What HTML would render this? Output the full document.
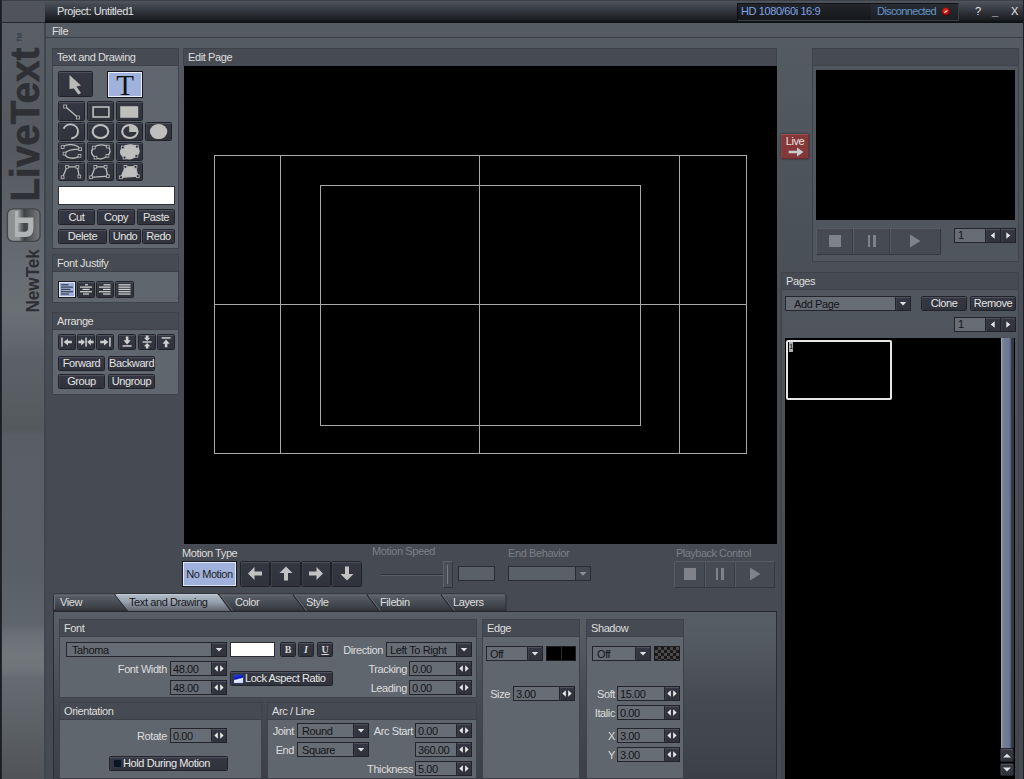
<!DOCTYPE html><html><head><meta charset="utf-8"><title>LiveText</title><style>
*{box-sizing:border-box;margin:0;padding:0}
html,body{width:1024px;height:779px;overflow:hidden;background:#484d55}
body{font:11px "Liberation Sans",sans-serif;letter-spacing:-0.4px;color:#dedede;position:relative}
#app{position:absolute;left:0;top:0;width:1024px;height:779px;overflow:hidden;background:linear-gradient(#555b63 38px,#4f555d 150px,#4a5058 255px,#464b53 400px)}
#app div,#app svg{position:absolute}
.t{white-space:nowrap;line-height:13px;height:13px}
.tr{text-align:right}
.hdr{background:#464b53}
.body{background:#60666e}
.btn{background:linear-gradient(#353842,#30333c);border:1px solid #212328;border-radius:1.5px;box-shadow:inset 0 1px 0 #4d515d,inset 1px 0 0 #3c3f4a;color:#e4e4e4;text-align:center;white-space:nowrap;line-height:13px}
.fld{background:#676d75;border:1px solid #23252a;color:#17181c;white-space:nowrap;line-height:13px}
.dis{color:#7b7f86}
.blk{background:#000}
.ln{background:#b4b4b4}
</style></head><body><div id="app">
<div class="" style="left:0px;top:0px;width:1024px;height:23px;background:linear-gradient(#2a2c31 0px,#4f555e 1px,#434850 5px,#383d45 9px,#272a30 15px,#1a1c20 20px,#0f1012 22px)"></div>
<div class="" style="left:0px;top:1px;width:45px;height:21px;background:#50545a"></div>
<div class="t" style="left:57px;top:5px;width:143px;height:13px;color:#e0e0e0">Project: Untitled1</div>
<div class="" style="left:45px;top:23px;width:979px;height:14px;background:#555b63"></div>
<div class="" style="left:45px;top:37px;width:979px;height:1px;background:#3a3e45"></div>
<div class="" style="left:45px;top:38px;width:979px;height:10px;background:#555b63"></div>
<div class="t" style="left:52px;top:25px;width:48px;height:13px;">File</div>
<div class="" style="left:0px;top:23px;width:45px;height:756px;background:linear-gradient(#5a5f65 0px,#55595f 127px,#5f646a 192px,#666b71 237px,#6b7075 287px,#656a70 312px,#5c6167 335px,#585d62 377px,#54595d 406px,#595e65 413px,#595f67 547px,#5f656c 601px,#6a6f75 611px,#73787d 632px,#6f7479 647px,#666b71 655px,#5e6368 693px,#575b60 725px,#505459 756px)"></div>
<div class="" style="left:0px;top:0px;width:2px;height:779px;background:linear-gradient(90deg,#17181b,#2a2c31)"></div>
<div class="" style="left:44px;top:23px;width:2px;height:756px;background:#3f464e"></div>
<div class="" style="left:2px;top:22px;width:43px;height:1px;background:#25272b"></div>
<div class="" style="left:52px;top:48px;width:127px;height:201px;background:#60666e;border:1px solid #3e4249"></div>
<div class="hdr" style="left:52px;top:48px;width:127px;height:18px;border:1px solid #3e4249;border-bottom-color:#3c4047"></div>
<div class="t" style="left:57px;top:51px;width:122px;height:13px;">Text and Drawing</div>
<div class="btn" style="left:58px;top:71px;width:35px;height:26px;line-height:24px;"></div>
<div class="" style="left:107px;top:71px;width:36px;height:27px;background:#a0b2dc;border:1px solid #15161a;box-shadow:inset 0 0 0 1px #e8eefb"></div>
<div class="t" style="left:107px;top:69px;width:36px;height:30px;line-height:30px;text-align:center;font:29px 'Liberation Serif',serif;letter-spacing:0;color:#111">T</div>
<svg style="left:58px;top:71px" width="35" height="27" viewBox="0 0 35 27"><path d="M11.5 4 L23 14.4 L18.4 15.6 L23 21.9 L20.3 23.5 L15.9 17.5 L11.5 18.1 Z" fill="#b9b9b7"/></svg>
<div class="btn" style="left:58px;top:101px;width:27px;height:20px;line-height:18px;"></div>
<div class="btn" style="left:87px;top:101px;width:27px;height:20px;line-height:18px;"></div>
<div class="btn" style="left:116px;top:101px;width:27px;height:20px;line-height:18px;"></div>
<div class="btn" style="left:58px;top:122px;width:27px;height:19px;line-height:17px;"></div>
<div class="btn" style="left:87px;top:122px;width:27px;height:19px;line-height:17px;"></div>
<div class="btn" style="left:116px;top:122px;width:27px;height:19px;line-height:17px;"></div>
<div class="btn" style="left:144.5px;top:122px;width:27.0px;height:19px;line-height:17px;"></div>
<div class="btn" style="left:58px;top:142px;width:27px;height:19px;line-height:17px;"></div>
<div class="btn" style="left:87px;top:142px;width:27px;height:19px;line-height:17px;"></div>
<div class="btn" style="left:116px;top:142px;width:27px;height:19px;line-height:17px;"></div>
<div class="btn" style="left:58px;top:162px;width:27px;height:19px;line-height:17px;"></div>
<div class="btn" style="left:87px;top:162px;width:27px;height:19px;line-height:17px;"></div>
<div class="btn" style="left:116px;top:162px;width:27px;height:19px;line-height:17px;"></div>
<svg style="left:58px;top:101px" width="28" height="20" viewBox="0 0 28 20"><path d="M7.2 5.6 L20 16.6" stroke="#bebebc" stroke-width="1.3" fill="none"/><rect x="5.7" y="4" width="3" height="3" fill="#2c2f38" stroke="#bebebc" stroke-width="0.8"/><rect x="18.5" y="15" width="3" height="3" fill="#2c2f38" stroke="#bebebc" stroke-width="0.8"/></svg>
<svg style="left:87px;top:101px" width="28" height="20" viewBox="0 0 28 20"><rect x="6.1" y="6" width="15.8" height="10" fill="none" stroke="#bebebc" stroke-width="1.6"/></svg>
<svg style="left:116px;top:101px" width="28" height="20" viewBox="0 0 28 20"><rect x="4.2" y="5.2" width="18" height="11.6" fill="#bebebc"/></svg>
<svg style="left:58px;top:121px" width="28" height="21" viewBox="0 0 28 21"><path d="M5.6 7.7 A7.5 7 0 1 1 13.2 17.4" stroke="#bebebc" stroke-width="2" fill="none"/></svg>
<svg style="left:87px;top:121px" width="28" height="21" viewBox="0 0 28 21"><ellipse cx="13.5" cy="10.5" rx="7.8" ry="6.5" fill="none" stroke="#bebebc" stroke-width="2.1"/></svg>
<svg style="left:116px;top:121px" width="28" height="21" viewBox="0 0 28 21"><ellipse cx="13.9" cy="10.5" rx="7.7" ry="6.5" fill="none" stroke="#bebebc" stroke-width="2.1"/><path d="M13.2 10.9 L13.2 4.2 A7.5 6.5 0 0 1 21.5 10.9 Z" fill="#bebebc"/></svg>
<svg style="left:144.5px;top:121px" width="28" height="21" viewBox="0 0 28 21"><ellipse cx="13.6" cy="10.6" rx="8.7" ry="7.5" fill="#bebebc"/></svg>
<svg style="left:58px;top:142px" width="28" height="20" viewBox="0 0 28 20"><path d="M4.6 5 C8 1.6 19 1.2 22.2 7.2 C17 7.2 9 8 6.5 11.6 C8 17 18 17.6 21.5 13.8" stroke="#bebebc" stroke-width="1.3" fill="none"/><rect x="3.1999999999999997" y="3.6" width="2.8" height="2.8" fill="#2c2f38" stroke="#bebebc" stroke-width="0.8"/><rect x="20.8" y="5.800000000000001" width="2.8" height="2.8" fill="#2c2f38" stroke="#bebebc" stroke-width="0.8"/><rect x="5.1" y="10.2" width="2.8" height="2.8" fill="#2c2f38" stroke="#bebebc" stroke-width="0.8"/><rect x="20.1" y="12.4" width="2.8" height="2.8" fill="#2c2f38" stroke="#bebebc" stroke-width="0.8"/></svg>
<svg style="left:87px;top:142px" width="28" height="20" viewBox="0 0 28 20"><path d="M6.8 5.5 C10 2.2 17 2 20.8 4.6 C24.5 7.5 23.5 11.5 20.4 13.8 C17 17.2 11.5 17.8 8.5 15.6 C3.5 12.5 3.8 8.5 6.8 5.5 Z" stroke="#bebebc" stroke-width="1.3" fill="none"/><rect x="5.4" y="4.1" width="2.8" height="2.8" fill="#2c2f38" stroke="#bebebc" stroke-width="0.8"/><rect x="19.400000000000002" y="3.1999999999999997" width="2.8" height="2.8" fill="#2c2f38" stroke="#bebebc" stroke-width="0.8"/><rect x="7.1" y="14.2" width="2.8" height="2.8" fill="#2c2f38" stroke="#bebebc" stroke-width="0.8"/><rect x="19.0" y="12.4" width="2.8" height="2.8" fill="#2c2f38" stroke="#bebebc" stroke-width="0.8"/></svg>
<svg style="left:116px;top:142px" width="28" height="20" viewBox="0 0 28 20"><path d="M6.8 5.5 C10 2.2 17 2 20.8 4.6 C24.5 7.5 23.5 11.5 20.4 13.8 C17 17.2 11.5 17.8 8.5 15.6 C3.5 12.5 3.8 8.5 6.8 5.5 Z" stroke="#bebebc" stroke-width="1.3" fill="#bebebc"/><rect x="5.4" y="4.1" width="2.8" height="2.8" fill="#2c2f38" stroke="#bebebc" stroke-width="0.8"/><rect x="19.400000000000002" y="3.1999999999999997" width="2.8" height="2.8" fill="#2c2f38" stroke="#bebebc" stroke-width="0.8"/><rect x="7.1" y="14.2" width="2.8" height="2.8" fill="#2c2f38" stroke="#bebebc" stroke-width="0.8"/><rect x="19.0" y="12.4" width="2.8" height="2.8" fill="#2c2f38" stroke="#bebebc" stroke-width="0.8"/></svg>
<svg style="left:58px;top:162px" width="28" height="20" viewBox="0 0 28 20"><path d="M4.6 15.3 L9 4.8 L19.4 4.8 L21.3 14.5" stroke="#bebebc" stroke-width="1.3" fill="none"/><rect x="3.1999999999999997" y="13.9" width="2.8" height="2.8" fill="#2c2f38" stroke="#bebebc" stroke-width="0.8"/><rect x="7.6" y="3.4" width="2.8" height="2.8" fill="#2c2f38" stroke="#bebebc" stroke-width="0.8"/><rect x="18.0" y="3.4" width="2.8" height="2.8" fill="#2c2f38" stroke="#bebebc" stroke-width="0.8"/><rect x="19.900000000000002" y="13.1" width="2.8" height="2.8" fill="#2c2f38" stroke="#bebebc" stroke-width="0.8"/></svg>
<svg style="left:87px;top:162px" width="28" height="20" viewBox="0 0 28 20"><path d="M4.1 15.3 L8.3 4.8 L18.6 4.8 L20.8 14.2 Z" stroke="#bebebc" stroke-width="1.3" fill="none"/><rect x="2.6999999999999997" y="13.9" width="2.8" height="2.8" fill="#2c2f38" stroke="#bebebc" stroke-width="0.8"/><rect x="6.9" y="3.4" width="2.8" height="2.8" fill="#2c2f38" stroke="#bebebc" stroke-width="0.8"/><rect x="17.200000000000003" y="3.4" width="2.8" height="2.8" fill="#2c2f38" stroke="#bebebc" stroke-width="0.8"/><rect x="19.400000000000002" y="12.799999999999999" width="2.8" height="2.8" fill="#2c2f38" stroke="#bebebc" stroke-width="0.8"/></svg>
<svg style="left:116px;top:162px" width="28" height="20" viewBox="0 0 28 20"><path d="M5 15.3 L9.4 4.8 L19.5 4.8 L21.7 14.2 Z" stroke="#bebebc" stroke-width="1.3" fill="#bebebc"/><rect x="3.6" y="13.9" width="2.8" height="2.8" fill="#2c2f38" stroke="#bebebc" stroke-width="0.8"/><rect x="8.0" y="3.4" width="2.8" height="2.8" fill="#2c2f38" stroke="#bebebc" stroke-width="0.8"/><rect x="18.1" y="3.4" width="2.8" height="2.8" fill="#2c2f38" stroke="#bebebc" stroke-width="0.8"/><rect x="20.3" y="12.799999999999999" width="2.8" height="2.8" fill="#2c2f38" stroke="#bebebc" stroke-width="0.8"/></svg>
<div class="" style="left:58px;top:186px;width:117px;height:19px;background:#fff;border:1px solid #2e3036"></div>
<div class="btn" style="left:58px;top:209px;width:37px;height:16px;line-height:14px;">Cut</div>
<div class="btn" style="left:97px;top:209px;width:38px;height:16px;line-height:14px;">Copy</div>
<div class="btn" style="left:137px;top:209px;width:38px;height:16px;line-height:14px;">Paste</div>
<div class="btn" style="left:58px;top:229px;width:49px;height:15px;line-height:13px;">Delete</div>
<div class="btn" style="left:109px;top:229px;width:32px;height:15px;line-height:13px;">Undo</div>
<div class="btn" style="left:142px;top:229px;width:33px;height:15px;line-height:13px;">Redo</div>
<div class="" style="left:52px;top:254px;width:127px;height:49px;background:#60666e;border:1px solid #3e4249"></div>
<div class="hdr" style="left:52px;top:254px;width:127px;height:18px;border:1px solid #3e4249;border-bottom-color:#3c4047"></div>
<div class="t" style="left:57px;top:257px;width:122px;height:13px;">Font Justify</div>
<div class="" style="left:58px;top:281px;width:18px;height:17px;background:#a0b2dc;border:1px solid #1a1c22;box-shadow:inset 0 0 0 1px #dfe6f6"></div>
<div class="btn" style="left:77px;top:281px;width:18px;height:17px;line-height:15px;"></div>
<div class="btn" style="left:96px;top:281px;width:18px;height:17px;line-height:15px;"></div>
<div class="btn" style="left:115px;top:281px;width:19px;height:17px;line-height:15px;"></div>
<svg style="left:58px;top:281px" width="19" height="17" viewBox="0 0 19 17"><rect x="3" y="3.2" width="7.5" height="1.25" fill="#3a4150"/><rect x="3" y="5.5" width="12" height="1.25" fill="#3a4150"/><rect x="3" y="7.8" width="9.5" height="1.25" fill="#3a4150"/><rect x="3" y="10.1" width="12" height="1.25" fill="#3a4150"/><rect x="3" y="12.399999999999999" width="8" height="1.25" fill="#3a4150"/></svg>
<svg style="left:77px;top:281px" width="19" height="17" viewBox="0 0 19 17"><rect x="8" y="3.2" width="3" height="1.25" fill="#d4d4d4"/><rect x="3" y="5.5" width="12" height="1.25" fill="#d4d4d4"/><rect x="5.5" y="7.8" width="7.0" height="1.25" fill="#d4d4d4"/><rect x="3" y="10.1" width="12" height="1.25" fill="#d4d4d4"/><rect x="6" y="12.399999999999999" width="6" height="1.25" fill="#d4d4d4"/></svg>
<svg style="left:96px;top:281px" width="19" height="17" viewBox="0 0 19 17"><rect x="7.5" y="3.2" width="7.0" height="1.25" fill="#d4d4d4"/><rect x="3" y="5.5" width="11.5" height="1.25" fill="#d4d4d4"/><rect x="7" y="7.8" width="7.5" height="1.25" fill="#d4d4d4"/><rect x="3" y="10.1" width="11.5" height="1.25" fill="#d4d4d4"/><rect x="7" y="12.399999999999999" width="7.5" height="1.25" fill="#d4d4d4"/></svg>
<svg style="left:115px;top:281px" width="19" height="17" viewBox="0 0 19 17"><rect x="3.5" y="3.2" width="12.0" height="1.25" fill="#d4d4d4"/><rect x="3.5" y="5.5" width="12.0" height="1.25" fill="#d4d4d4"/><rect x="3.5" y="7.8" width="12.0" height="1.25" fill="#d4d4d4"/><rect x="3.5" y="10.1" width="12.0" height="1.25" fill="#d4d4d4"/><rect x="3.5" y="12.399999999999999" width="12.0" height="1.25" fill="#d4d4d4"/></svg>
<div class="" style="left:52px;top:312px;width:127px;height:83px;background:#60666e;border:1px solid #3e4249"></div>
<div class="hdr" style="left:52px;top:312px;width:127px;height:18px;border:1px solid #3e4249;border-bottom-color:#3c4047"></div>
<div class="t" style="left:57px;top:315px;width:122px;height:13px;">Arrange</div>
<div class="btn" style="left:58px;top:334px;width:18px;height:16px;line-height:14px;"></div>
<div class="btn" style="left:77px;top:334px;width:18px;height:16px;line-height:14px;"></div>
<div class="btn" style="left:96px;top:334px;width:18px;height:16px;line-height:14px;"></div>
<div class="btn" style="left:118px;top:334px;width:18px;height:16px;line-height:14px;"></div>
<div class="btn" style="left:138px;top:334px;width:18px;height:16px;line-height:14px;"></div>
<div class="btn" style="left:157px;top:334px;width:18px;height:16px;line-height:14px;"></div>
<svg style="left:58px;top:334px" width="18" height="16" viewBox="0 0 18 16"><rect x="3.2" y="3.6" width="1.5" height="9" fill="#cfcfcf"/><path d="M5.6 8.1 L10.0 4.699999999999999 L10.0 6.85 L13.8 6.85 L13.8 9.35 L10.0 9.35 L10.0 11.5 Z" fill="#cfcfcf"/></svg>
<svg style="left:77px;top:334px" width="18" height="16" viewBox="0 0 18 16"><rect x="8.3" y="3.6" width="1.5" height="9" fill="#cfcfcf"/><path d="M8 8.1 L4.2 4.699999999999999 L4.2 6.85 L1.4000000000000004 6.85 L1.4000000000000004 9.35 L4.2 9.35 L4.2 11.5 Z" fill="#cfcfcf"/><path d="M10.1 8.1 L13.899999999999999 4.699999999999999 L13.899999999999999 6.85 L16.7 6.85 L16.7 9.35 L13.899999999999999 9.35 L13.899999999999999 11.5 Z" fill="#cfcfcf"/></svg>
<svg style="left:96px;top:334px" width="18" height="16" viewBox="0 0 18 16"><rect x="13.2" y="3.6" width="1.5" height="9" fill="#cfcfcf"/><path d="M12.4 8.1 L8.0 4.699999999999999 L8.0 6.85 L4.2 6.85 L4.2 9.35 L8.0 9.35 L8.0 11.5 Z" fill="#cfcfcf"/></svg>
<svg style="left:118px;top:334px" width="18" height="16" viewBox="0 0 18 16"><rect x="4.6" y="11.2" width="9" height="1.5" fill="#cfcfcf"/><path d="M9.1 10.4 L5.5 6.2 L7.8 6.2 L7.8 2.6 L10.4 2.6 L10.4 6.2 L12.7 6.2 Z" fill="#cfcfcf"/></svg>
<svg style="left:138px;top:334px" width="18" height="16" viewBox="0 0 18 16"><rect x="4.6" y="7.3" width="9" height="1.4" fill="#cfcfcf"/><path d="M9.1 6.9 L5.8999999999999995 3.7 L7.8 3.7 L7.8 1.5 L10.4 1.5 L10.4 3.7 L12.3 3.7 Z" fill="#cfcfcf"/><path d="M9.1 9.1 L5.8999999999999995 12.3 L7.8 12.3 L7.8 14.5 L10.4 14.5 L10.4 12.3 L12.3 12.3 Z" fill="#cfcfcf"/></svg>
<svg style="left:157px;top:334px" width="18" height="16" viewBox="0 0 18 16"><rect x="4.6" y="3.2" width="9" height="1.5" fill="#cfcfcf"/><path d="M9.1 5.5 L5.5 9.7 L7.8 9.7 L7.8 13.299999999999999 L10.4 13.299999999999999 L10.4 9.7 L12.7 9.7 Z" fill="#cfcfcf"/></svg>
<div class="btn" style="left:58px;top:356px;width:47px;height:15px;line-height:13px;">Forward</div>
<div class="btn" style="left:108px;top:356px;width:47px;height:15px;line-height:13px;">Backward</div>
<div class="btn" style="left:58px;top:374px;width:47px;height:15px;line-height:13px;">Group</div>
<div class="btn" style="left:108px;top:374px;width:47px;height:15px;line-height:13px;">Ungroup</div>
<div class="hdr" style="left:183px;top:48px;width:594px;height:18px;border:1px solid #3e4249;border-bottom:0"></div>
<div class="t" style="left:188px;top:51px;width:112px;height:13px;">Edit Page</div>
<div class="blk" style="left:184px;top:66px;width:593px;height:478px;"></div>
<div class="" style="left:214px;top:155px;width:533px;height:1px;background:#a8a8a8"></div>
<div class="" style="left:214px;top:453px;width:533px;height:1px;background:#a8a8a8"></div>
<div class="" style="left:214px;top:155px;width:1px;height:299px;background:#a8a8a8"></div>
<div class="" style="left:746px;top:155px;width:1px;height:299px;background:#a8a8a8"></div>
<div class="" style="left:320px;top:185px;width:321px;height:1px;background:#a8a8a8"></div>
<div class="" style="left:320px;top:425px;width:321px;height:1px;background:#a8a8a8"></div>
<div class="" style="left:320px;top:185px;width:1px;height:241px;background:#a8a8a8"></div>
<div class="" style="left:640px;top:185px;width:1px;height:241px;background:#a8a8a8"></div>
<div class="" style="left:214px;top:304px;width:533px;height:1px;background:#a8a8a8"></div>
<div class="" style="left:280px;top:155px;width:1px;height:299px;background:#a8a8a8"></div>
<div class="" style="left:479px;top:155px;width:1px;height:299px;background:#a8a8a8"></div>
<div class="" style="left:679px;top:155px;width:1px;height:299px;background:#a8a8a8"></div>
<div class="t" style="left:182px;top:547px;width:118px;height:13px;">Motion Type</div>
<div class="" style="left:182px;top:561px;width:55px;height:26px;background:#a0b2dc;border:1px solid #1a1c22;box-shadow:inset 0 0 0 1px #dfe6f6;color:#1b1d24;text-align:center;line-height:24px">No Motion</div>
<div class="btn" style="left:239.5px;top:561px;width:30.5px;height:26px;line-height:24px;"></div>
<div class="btn" style="left:270px;top:561px;width:30.5px;height:26px;line-height:24px;"></div>
<div class="btn" style="left:300.5px;top:561px;width:30.5px;height:26px;line-height:24px;"></div>
<div class="btn" style="left:331px;top:561px;width:30.5px;height:26px;line-height:24px;"></div>
<svg style="left:240px;top:560px" width="30" height="27" viewBox="0 0 30 27"><g transform="rotate(0 15 13.5)"><path d="M8 13.5 L14.5 7 L14.5 11.5 L22 11.5 L22 15.5 L14.5 15.5 L14.5 20 Z" fill="#c2c2c2"/></g></svg>
<svg style="left:270.5px;top:560px" width="30" height="27" viewBox="0 0 30 27"><g transform="rotate(90 15 13.5)"><path d="M8 13.5 L14.5 7 L14.5 11.5 L22 11.5 L22 15.5 L14.5 15.5 L14.5 20 Z" fill="#c2c2c2"/></g></svg>
<svg style="left:300.5px;top:560px" width="30" height="27" viewBox="0 0 30 27"><g transform="rotate(180 15 13.5)"><path d="M8 13.5 L14.5 7 L14.5 11.5 L22 11.5 L22 15.5 L14.5 15.5 L14.5 20 Z" fill="#c2c2c2"/></g></svg>
<svg style="left:331.5px;top:560px" width="30" height="27" viewBox="0 0 30 27"><g transform="rotate(270 15 13.5)"><path d="M8 13.5 L14.5 7 L14.5 11.5 L22 11.5 L22 15.5 L14.5 15.5 L14.5 20 Z" fill="#c2c2c2"/></g></svg>
<div class="t dis" style="left:372px;top:545px;width:98px;height:13px;">Motion Speed</div>
<div class="" style="left:381px;top:574px;width:62px;height:1px;background:#2e3137"></div>
<div class="" style="left:381px;top:575px;width:62px;height:1px;background:#5a5f67"></div>
<div class="" style="left:443px;top:561px;width:10px;height:27px;background:#4a4f57;border:1px solid;border-color:#5c616a #33363c #33363c #5c616a"></div>
<div class="" style="left:447px;top:565px;width:1px;height:19px;background:#767b83"></div>
<div class="" style="left:458px;top:566px;width:37px;height:15px;background:#5a6068;border:1px solid #2a2c32"></div>
<div class="t dis" style="left:508px;top:547px;width:92px;height:13px;">End Behavior</div>
<div class="" style="left:508px;top:566px;width:83px;height:15px;background:#5a6068;border:1px solid #2a2c32"></div>
<div class="" style="left:575px;top:566px;width:16px;height:15px;background:#454951;border:1px solid #2a2c32"></div>
<svg style="left:575px;top:566px" width="16" height="15" viewBox="0 0 16 15"><path d="M4.5 6 L11.5 6 L8 9.8 Z" fill="#8c9096"/></svg>
<div class="t dis" style="left:676px;top:547px;width:104px;height:13px;letter-spacing:-0.52px">Playback Control</div>
<div class="" style="left:674px;top:561px;width:101px;height:27px;background:#464b53;border:1px solid;border-color:#575c64 #35383e #35383e #575c64;border-radius:2px"></div>
<div class="" style="left:704px;top:562px;width:1px;height:25px;background:#3a3d43"></div>
<div class="" style="left:705px;top:562px;width:1px;height:25px;background:#565b63"></div>
<div class="" style="left:734px;top:562px;width:1px;height:25px;background:#3a3d43"></div>
<div class="" style="left:735px;top:562px;width:1px;height:25px;background:#565b63"></div>
<div class="" style="left:684px;top:568px;width:12px;height:12px;background:#7f8389"></div>
<div class="" style="left:715.5px;top:568px;width:2.5px;height:12px;background:#7f8389"></div>
<div class="" style="left:721px;top:568px;width:2.5px;height:12px;background:#7f8389"></div>
<svg style="left:749px;top:567px" width="12" height="14" viewBox="0 0 12 14"><path d="M1 0.5 L11.5 7 L1 13.5 Z" fill="#7f8389"/></svg>
<svg style="left:53px;top:593px" width="454" height="19" viewBox="0 0 454 19"><defs><linearGradient id="tg" x1="0" y1="0" x2="0" y2="1"><stop offset="0" stop-color="#5c626a"/><stop offset="0.45" stop-color="#4b5058"/><stop offset="0.85" stop-color="#393d44"/><stop offset="1" stop-color="#2f3237"/></linearGradient><linearGradient id="ta" x1="0" y1="0" x2="0" y2="1"><stop offset="0" stop-color="#b6bfcc"/><stop offset="0.45" stop-color="#98a1ae"/><stop offset="1" stop-color="#5d636b"/></linearGradient></defs><path d="M0.5 18 L0.5 3 Q0.5 1 2.5 1 L451 1 Q453 1 453 3 L453 18 Z" fill="url(#tg)" stroke="#2a2d32" stroke-width="1"/><path d="M1.5 16 L1.5 2 L452 2" fill="none" stroke="#6c727a" stroke-width="1"/><path d="M166 1.5 L178 17.5" stroke="#2a2d32" stroke-width="1.4" fill="none"/><path d="M167.4 2 L179.4 17.5" stroke="#6a7078" stroke-width="1" fill="none"/><path d="M240 1.5 L252 17.5" stroke="#2a2d32" stroke-width="1.4" fill="none"/><path d="M241.4 2 L253.4 17.5" stroke="#6a7078" stroke-width="1" fill="none"/><path d="M314 1.5 L326 17.5" stroke="#2a2d32" stroke-width="1.4" fill="none"/><path d="M315.4 2 L327.4 17.5" stroke="#6a7078" stroke-width="1" fill="none"/><path d="M388 1.5 L400 17.5" stroke="#2a2d32" stroke-width="1.4" fill="none"/><path d="M389.4 2 L401.4 17.5" stroke="#6a7078" stroke-width="1" fill="none"/><path d="M75 18.5 L62 2 Q61 0.6 63 0.6 L163 0.6 Q165 0.6 166 2 L178 18.5 Z" fill="url(#ta)" stroke="#2a2d32" stroke-width="1"/><path d="M63.5 1.6 L164 1.6" stroke="#c4ccd8" stroke-width="1" fill="none"/><path d="M75.8 18.5 L177.2 18.5" stroke="#5d636b" stroke-width="1.4" fill="none"/></svg>
<div class="t" style="left:60px;top:596px;width:100px;height:13px;">View</div>
<div class="t" style="left:129px;top:596px;width:100px;height:13px;color:#17181c">Text and Drawing</div>
<div class="t" style="left:235px;top:596px;width:100px;height:13px;">Color</div>
<div class="t" style="left:306px;top:596px;width:100px;height:13px;">Style</div>
<div class="t" style="left:380px;top:596px;width:100px;height:13px;">Filebin</div>
<div class="t" style="left:453px;top:596px;width:100px;height:13px;">Layers</div>
<div class="" style="left:737px;top:3px;width:222px;height:18px;background:linear-gradient(#22252a,#15171a);border:1px solid #0d0e10;border-top-color:#131417;border-bottom-color:#3a3e45;border-right-color:#3a3e45"></div>
<div class="" style="left:871px;top:4px;width:87px;height:16px;background:linear-gradient(#282c33,#1c1f24)"></div>
<div class="t" style="left:741px;top:5px;width:119px;height:13px;color:#7fa6e8">HD 1080/60i 16:9</div>
<div class="t" style="left:877px;top:5px;width:73px;height:13px;color:#6696c8;letter-spacing:-0.65px">Disconnected</div>
<svg style="left:940px;top:6px" width="12" height="12" viewBox="0 0 12 12"><defs><radialGradient id="rd" cx="0.45" cy="0.4" r="0.6"><stop offset="0" stop-color="#f03a30"/><stop offset="0.55" stop-color="#b81212"/><stop offset="1" stop-color="#3a0606"/></radialGradient></defs><circle cx="6" cy="5.7" r="4.3" fill="url(#rd)"/><path d="M4.3 6.8 L7.6 4.5" stroke="#f0c4c4" stroke-width="1.2"/></svg>
<div class="t" style="left:975px;top:5px;width:10px;height:13px;color:#e4e4e4;letter-spacing:0;font-size:11px">?</div>
<div class="t" style="left:992px;top:5px;width:12px;height:13px;color:#e4e4e4;letter-spacing:0;font-size:11px;font-weight:bold">_</div>
<div class="t" style="left:1011px;top:5px;width:11px;height:13px;color:#e4e4e4;letter-spacing:0;font-size:11px">X</div>
<div class="" style="left:781px;top:134px;width:28px;height:25px;background:#853839;border:1px solid;border-color:#a04a4a #702e2f #6a2a2b #8e3e3f;box-shadow:0 0 2px rgba(30,32,36,0.8)"></div>
<div class="t" style="left:781px;top:135px;width:28px;height:13px;text-align:center;color:#ece2e2">Live</div>
<svg style="left:787px;top:146.5px" width="18" height="10" viewBox="0 0 18 10"><path d="M1.7 3.8 L10 3.8 L10 0.6 L16.4 5 L10 9.4 L10 6.3 L1.7 6.3 Z" fill="#c8cccc"/></svg>
<div class="" style="left:812px;top:48px;width:207px;height:214px;background:#50565e;border:1px solid #3e4249"></div>
<div class="hdr" style="left:812px;top:48px;width:207px;height:18px;border:1px solid #3e4249"></div>
<div class="blk" style="left:816px;top:70px;width:199px;height:150px;"></div>
<div class="" style="left:816px;top:228px;width:125px;height:27px;background:#464b53;border:1px solid;border-color:#575c64 #35383e #35383e #575c64;border-radius:2px"></div>
<div class="" style="left:852px;top:229px;width:1px;height:25px;background:#3a3d43"></div>
<div class="" style="left:853px;top:229px;width:1px;height:25px;background:#565b63"></div>
<div class="" style="left:889px;top:229px;width:1px;height:25px;background:#3a3d43"></div>
<div class="" style="left:890px;top:229px;width:1px;height:25px;background:#565b63"></div>
<div class="" style="left:829px;top:235px;width:12px;height:12px;background:#7f8389"></div>
<div class="" style="left:867.5px;top:235px;width:2.5px;height:12px;background:#7f8389"></div>
<div class="" style="left:873px;top:235px;width:2.5px;height:12px;background:#7f8389"></div>
<svg style="left:909px;top:234px" width="12" height="14" viewBox="0 0 12 14"><path d="M1 0.5 L11.5 7 L1 13.5 Z" fill="#7f8389"/></svg>
<div class="fld" style="left:954px;top:228px;width:62px;height:15px;"></div>
<div class="t" style="left:958px;top:228px;width:58px;height:15px;line-height:15px;height:15px;color:#141518">1</div>
<div class="btn" style="left:985px;top:228px;width:16px;height:15px;"></div>
<svg style="left:985px;top:228px" width="16" height="15" viewBox="0 0 16 15"><path d="M9.7 4.3 L9.7 10.7 L5.7 7.5 Z" fill="#e6e6e6"/></svg>
<div class="btn" style="left:1000px;top:228px;width:16px;height:15px;"></div>
<svg style="left:1000px;top:228px" width="16" height="15" viewBox="0 0 16 15"><path d="M6.3 4.3 L6.3 10.7 L10.3 7.5 Z" fill="#e6e6e6"/></svg>
<div class="" style="left:781px;top:272px;width:238px;height:507px;background:linear-gradient(#50565e 30px,#4b5058 200px,#41454b 507px);border:1px solid #3e4249;border-bottom:0"></div>
<div class="hdr" style="left:781px;top:272px;width:238px;height:18px;border:1px solid #3e4249"></div>
<div class="t" style="left:786px;top:275px;width:114px;height:13px;">Pages</div>
<div class="fld" style="left:785px;top:296px;width:126px;height:15px;"></div>
<div class="t" style="left:794px;top:297px;width:101px;height:15px;line-height:15px;height:15px;color:#141518">Add Page</div>
<div class="btn" style="left:895px;top:296px;width:16px;height:15px;"></div>
<svg style="left:895px;top:296px" width="16" height="15" viewBox="0 0 16 15"><path d="M4.8 6.1 L11.2 6.1 L8.0 9.5 Z" fill="#e2e2e2"/></svg>
<div class="btn" style="left:921px;top:296px;width:46px;height:15px;line-height:13px;">Clone</div>
<div class="btn" style="left:970px;top:296px;width:46px;height:15px;line-height:13px;">Remove</div>
<div class="fld" style="left:954px;top:317px;width:62px;height:15px;"></div>
<div class="t" style="left:958px;top:317px;width:58px;height:15px;line-height:15px;height:15px;color:#141518">1</div>
<div class="btn" style="left:985px;top:317px;width:16px;height:15px;"></div>
<svg style="left:985px;top:317px" width="16" height="15" viewBox="0 0 16 15"><path d="M9.7 4.3 L9.7 10.7 L5.7 7.5 Z" fill="#e6e6e6"/></svg>
<div class="btn" style="left:1000px;top:317px;width:16px;height:15px;"></div>
<svg style="left:1000px;top:317px" width="16" height="15" viewBox="0 0 16 15"><path d="M6.3 4.3 L6.3 10.7 L10.3 7.5 Z" fill="#e6e6e6"/></svg>
<div class="blk" style="left:785px;top:338px;width:230px;height:441px;"></div>
<div class="" style="left:786px;top:340px;width:106px;height:60px;border:2px solid #e6e6e6;border-radius:2px;background:#000"></div>
<div class="" style="left:789px;top:342px;width:4px;height:10px;font-size:8px;line-height:10px;color:#16171a;letter-spacing:0;background:#b0b0b0;text-align:center;overflow:hidden">1</div>
<div class="" style="left:1000px;top:338px;width:15px;height:441px;background:#000"></div>
<div class="" style="left:1001px;top:338px;width:13px;height:410px;background:linear-gradient(90deg,#a4acb8 0px,#7f8ba0 1.5px,#707d94 3px,#6c7990 8px,#56617a 9.5px,#363c4a 10.5px,#2e333d 13px)"></div>
<div class="btn" style="left:1000px;top:748px;width:14px;height:14px;line-height:12px;"></div>
<div class="btn" style="left:1000px;top:763px;width:14px;height:13px;line-height:11px;"></div>
<svg style="left:1000px;top:748px" width="14" height="14" viewBox="0 0 14 14"><path d="M3 9.6 L11 9.6 L7 5.8 Z" fill="#e2e2e2"/></svg>
<svg style="left:1000px;top:763px" width="14" height="13" viewBox="0 0 14 13"><path d="M3 4.6 L11 4.6 L7 8.4 Z" fill="#e2e2e2"/></svg>
<div class="" style="left:53px;top:611px;width:724px;height:168px;background:linear-gradient(#585e66 0px,#545a62 30px,#454a52 90px,#3c4046 168px);border:1px solid #2a2d32;border-bottom:0;border-top-color:#26282d"></div>
<div class="" style="left:59px;top:619px;width:418px;height:79px;background:#60666e;border:1px solid #3e4249"></div>
<div class="hdr" style="left:59px;top:619px;width:418px;height:18px;border:1px solid #3e4249;border-bottom-color:#3c4047"></div>
<div class="t" style="left:64px;top:622px;width:413px;height:13px;">Font</div>
<div class="fld" style="left:66px;top:642px;width:161px;height:15px;"></div>
<div class="t" style="left:72px;top:643px;width:139px;height:15px;line-height:15px;height:15px;color:#141518">Tahoma</div>
<div class="btn" style="left:211px;top:642px;width:16px;height:15px;"></div>
<svg style="left:211px;top:642px" width="16" height="15" viewBox="0 0 16 15"><path d="M4.8 6.1 L11.2 6.1 L8.0 9.5 Z" fill="#e2e2e2"/></svg>
<div class="" style="left:230px;top:642px;width:45px;height:15px;background:#fff;border:1px solid #2a2c32"></div>
<div class="btn" style="left:280px;top:642px;width:16px;height:15px;line-height:13px;font:bold 10px 'Liberation Serif',serif;letter-spacing:0;line-height:13px;color:#d8d8d8">B</div>
<div class="btn" style="left:298px;top:642px;width:16px;height:15px;line-height:13px;font:italic bold 10px 'Liberation Serif',serif;letter-spacing:0;line-height:13px;color:#d8d8d8">I</div>
<div class="btn" style="left:317px;top:642px;width:16px;height:15px;line-height:13px;font:bold 10px 'Liberation Serif',serif;letter-spacing:0;line-height:13px;color:#d8d8d8;text-decoration:underline">U</div>
<div class="t tr" style="left:293px;top:644px;width:90px;height:13px;">Direction</div>
<div class="fld" style="left:386px;top:642px;width:86px;height:15px;"></div>
<div class="t" style="left:390px;top:643px;width:66px;height:15px;line-height:15px;height:15px;color:#141518">Left To Right</div>
<div class="btn" style="left:456px;top:642px;width:16px;height:15px;"></div>
<svg style="left:456px;top:642px" width="16" height="15" viewBox="0 0 16 15"><path d="M4.8 6.1 L11.2 6.1 L8.0 9.5 Z" fill="#e2e2e2"/></svg>
<div class="t tr" style="left:77px;top:663px;width:90px;height:13px;">Font Width</div>
<div class="fld" style="left:170px;top:661px;width:57px;height:15px;"></div>
<div class="t" style="left:173px;top:662px;width:38px;height:15px;line-height:15px;height:15px;color:#141518">48.00</div>
<div class="btn" style="left:211px;top:661px;width:16px;height:15px;"></div>
<svg style="left:211px;top:661px" width="16" height="15" viewBox="0 0 16 15"><path d="M6.8 4.3 L6.8 10.7 L3.4000000000000004 7.5 Z" fill="#ececec"/><path d="M9.2 4.3 L9.2 10.7 L12.6 7.5 Z" fill="#ececec"/></svg>
<div class="fld" style="left:170px;top:680px;width:57px;height:15px;"></div>
<div class="t" style="left:173px;top:681px;width:38px;height:15px;line-height:15px;height:15px;color:#141518">48.00</div>
<div class="btn" style="left:211px;top:680px;width:16px;height:15px;"></div>
<svg style="left:211px;top:680px" width="16" height="15" viewBox="0 0 16 15"><path d="M6.8 4.3 L6.8 10.7 L3.4000000000000004 7.5 Z" fill="#ececec"/><path d="M9.2 4.3 L9.2 10.7 L12.6 7.5 Z" fill="#ececec"/></svg>
<div class="btn" style="left:230px;top:671px;width:103px;height:15px;line-height:13px;"></div>
<div class="" style="left:234px;top:675px;width:9px;height:8px;background:linear-gradient(165deg,#3344f4 0%,#0812b4 42%,#eef0ff 56%,#c4ccff 100%);box-shadow:0 0 2px #3050c8"></div>
<div class="t" style="left:245px;top:672px;width:89px;height:13px;color:#e8e8e8;letter-spacing:-0.45px">Lock Aspect Ratio</div>
<div class="t tr" style="left:317px;top:663px;width:90px;height:13px;">Tracking</div>
<div class="fld" style="left:409px;top:661px;width:63px;height:15px;"></div>
<div class="t" style="left:412px;top:662px;width:44px;height:15px;line-height:15px;height:15px;color:#141518">0.00</div>
<div class="btn" style="left:456px;top:661px;width:16px;height:15px;"></div>
<svg style="left:456px;top:661px" width="16" height="15" viewBox="0 0 16 15"><path d="M6.8 4.3 L6.8 10.7 L3.4000000000000004 7.5 Z" fill="#ececec"/><path d="M9.2 4.3 L9.2 10.7 L12.6 7.5 Z" fill="#ececec"/></svg>
<div class="t tr" style="left:317px;top:682px;width:90px;height:13px;">Leading</div>
<div class="fld" style="left:409px;top:680px;width:63px;height:15px;"></div>
<div class="t" style="left:412px;top:681px;width:44px;height:15px;line-height:15px;height:15px;color:#141518">0.00</div>
<div class="btn" style="left:456px;top:680px;width:16px;height:15px;"></div>
<svg style="left:456px;top:680px" width="16" height="15" viewBox="0 0 16 15"><path d="M6.8 4.3 L6.8 10.7 L3.4000000000000004 7.5 Z" fill="#ececec"/><path d="M9.2 4.3 L9.2 10.7 L12.6 7.5 Z" fill="#ececec"/></svg>
<div class="" style="left:59px;top:702px;width:203px;height:77px;background:#60666e;border:1px solid #3e4249"></div>
<div class="hdr" style="left:59px;top:702px;width:203px;height:18px;border:1px solid #3e4249;border-bottom-color:#3c4047"></div>
<div class="t" style="left:64px;top:705px;width:198px;height:13px;">Orientation</div>
<div class="t tr" style="left:77px;top:730px;width:90px;height:13px;">Rotate</div>
<div class="fld" style="left:170px;top:728px;width:57px;height:15px;"></div>
<div class="t" style="left:173px;top:729px;width:38px;height:15px;line-height:15px;height:15px;color:#141518">0.00</div>
<div class="btn" style="left:211px;top:728px;width:16px;height:15px;"></div>
<svg style="left:211px;top:728px" width="16" height="15" viewBox="0 0 16 15"><path d="M6.8 4.3 L6.8 10.7 L3.4000000000000004 7.5 Z" fill="#ececec"/><path d="M9.2 4.3 L9.2 10.7 L12.6 7.5 Z" fill="#ececec"/></svg>
<div class="btn" style="left:109px;top:756px;width:119px;height:15px;line-height:13px;"></div>
<div class="" style="left:113px;top:759px;width:9px;height:9px;background:#0c1620;border:1px solid #2c3a48"></div>
<div class="t" style="left:123px;top:757px;width:105px;height:13px;color:#e8e8e8">Hold During Motion</div>
<div class="" style="left:267px;top:702px;width:210px;height:77px;background:#60666e;border:1px solid #3e4249"></div>
<div class="hdr" style="left:267px;top:702px;width:210px;height:18px;border:1px solid #3e4249;border-bottom-color:#3c4047"></div>
<div class="t" style="left:272px;top:705px;width:205px;height:13px;">Arc / Line</div>
<div class="t tr" style="left:204px;top:725px;width:90px;height:13px;">Joint</div>
<div class="fld" style="left:297px;top:723px;width:72px;height:15px;"></div>
<div class="t" style="left:302px;top:724px;width:51px;height:15px;line-height:15px;height:15px;color:#141518">Round</div>
<div class="btn" style="left:353px;top:723px;width:16px;height:15px;"></div>
<svg style="left:353px;top:723px" width="16" height="15" viewBox="0 0 16 15"><path d="M4.8 6.1 L11.2 6.1 L8.0 9.5 Z" fill="#e2e2e2"/></svg>
<div class="t tr" style="left:204px;top:744px;width:90px;height:13px;">End</div>
<div class="fld" style="left:297px;top:742px;width:72px;height:15px;"></div>
<div class="t" style="left:302px;top:743px;width:51px;height:15px;line-height:15px;height:15px;color:#141518">Square</div>
<div class="btn" style="left:353px;top:742px;width:16px;height:15px;"></div>
<svg style="left:353px;top:742px" width="16" height="15" viewBox="0 0 16 15"><path d="M4.8 6.1 L11.2 6.1 L8.0 9.5 Z" fill="#e2e2e2"/></svg>
<div class="t tr" style="left:323px;top:725px;width:90px;height:13px;">Arc Start</div>
<div class="fld" style="left:415px;top:723px;width:57px;height:15px;"></div>
<div class="t" style="left:418px;top:724px;width:38px;height:15px;line-height:15px;height:15px;color:#141518">0.00</div>
<div class="btn" style="left:456px;top:723px;width:16px;height:15px;"></div>
<svg style="left:456px;top:723px" width="16" height="15" viewBox="0 0 16 15"><path d="M6.8 4.3 L6.8 10.7 L3.4000000000000004 7.5 Z" fill="#ececec"/><path d="M9.2 4.3 L9.2 10.7 L12.6 7.5 Z" fill="#ececec"/></svg>
<div class="fld" style="left:415px;top:742px;width:57px;height:15px;"></div>
<div class="t" style="left:418px;top:743px;width:38px;height:15px;line-height:15px;height:15px;color:#141518">360.00</div>
<div class="btn" style="left:456px;top:742px;width:16px;height:15px;"></div>
<svg style="left:456px;top:742px" width="16" height="15" viewBox="0 0 16 15"><path d="M6.8 4.3 L6.8 10.7 L3.4000000000000004 7.5 Z" fill="#ececec"/><path d="M9.2 4.3 L9.2 10.7 L12.6 7.5 Z" fill="#ececec"/></svg>
<div class="t tr" style="left:323px;top:763px;width:90px;height:13px;">Thickness</div>
<div class="fld" style="left:415px;top:761px;width:57px;height:15px;"></div>
<div class="t" style="left:418px;top:762px;width:38px;height:15px;line-height:15px;height:15px;color:#141518">5.00</div>
<div class="btn" style="left:456px;top:761px;width:16px;height:15px;"></div>
<svg style="left:456px;top:761px" width="16" height="15" viewBox="0 0 16 15"><path d="M6.8 4.3 L6.8 10.7 L3.4000000000000004 7.5 Z" fill="#ececec"/><path d="M9.2 4.3 L9.2 10.7 L12.6 7.5 Z" fill="#ececec"/></svg>
<div class="" style="left:482px;top:619px;width:98px;height:160px;background:#60666e;border:1px solid #3e4249"></div>
<div class="hdr" style="left:482px;top:619px;width:98px;height:18px;border:1px solid #3e4249;border-bottom-color:#3c4047"></div>
<div class="t" style="left:487px;top:622px;width:93px;height:13px;">Edge</div>
<div class="fld" style="left:486px;top:646px;width:57px;height:15px;"></div>
<div class="t" style="left:490px;top:647px;width:37px;height:15px;line-height:15px;height:15px;color:#141518">Off</div>
<div class="btn" style="left:527px;top:646px;width:16px;height:15px;"></div>
<svg style="left:527px;top:646px" width="16" height="15" viewBox="0 0 16 15"><path d="M4.8 6.1 L11.2 6.1 L8.0 9.5 Z" fill="#e2e2e2"/></svg>
<div class="" style="left:546px;top:646px;width:30px;height:15px;background:#000;border:1px solid #1c1d20"></div>
<div class="" style="left:561px;top:647px;width:1px;height:13px;background:#2a2c30"></div>
<div class="t tr" style="left:420px;top:688px;width:90px;height:13px;">Size</div>
<div class="fld" style="left:513px;top:686px;width:62px;height:15px;"></div>
<div class="t" style="left:516px;top:687px;width:43px;height:15px;line-height:15px;height:15px;color:#141518">3.00</div>
<div class="btn" style="left:559px;top:686px;width:16px;height:15px;"></div>
<svg style="left:559px;top:686px" width="16" height="15" viewBox="0 0 16 15"><path d="M6.8 4.3 L6.8 10.7 L3.4000000000000004 7.5 Z" fill="#ececec"/><path d="M9.2 4.3 L9.2 10.7 L12.6 7.5 Z" fill="#ececec"/></svg>
<div class="" style="left:586px;top:619px;width:98px;height:160px;background:#60666e;border:1px solid #3e4249"></div>
<div class="hdr" style="left:586px;top:619px;width:98px;height:18px;border:1px solid #3e4249;border-bottom-color:#3c4047"></div>
<div class="t" style="left:591px;top:622px;width:93px;height:13px;">Shadow</div>
<div class="fld" style="left:592px;top:646px;width:59px;height:15px;"></div>
<div class="t" style="left:597px;top:647px;width:38px;height:15px;line-height:15px;height:15px;color:#141518">Off</div>
<div class="btn" style="left:635px;top:646px;width:16px;height:15px;"></div>
<svg style="left:635px;top:646px" width="16" height="15" viewBox="0 0 16 15"><path d="M4.8 6.1 L11.2 6.1 L8.0 9.5 Z" fill="#e2e2e2"/></svg>
<div class="" style="left:654px;top:646px;width:26px;height:15px;border:1px solid #1c1d20;background-color:#1a1a1a;background-image:linear-gradient(45deg,#4a4a4a 25%,transparent 25%,transparent 75%,#4a4a4a 75%),linear-gradient(45deg,#4a4a4a 25%,transparent 25%,transparent 75%,#4a4a4a 75%);background-size:6px 6px;background-position:0 0,3px 3px"></div>
<div class="t tr" style="left:525px;top:688px;width:90px;height:13px;">Soft</div>
<div class="fld" style="left:617px;top:686px;width:63px;height:15px;"></div>
<div class="t" style="left:620px;top:687px;width:44px;height:15px;line-height:15px;height:15px;color:#141518">15.00</div>
<div class="btn" style="left:664px;top:686px;width:16px;height:15px;"></div>
<svg style="left:664px;top:686px" width="16" height="15" viewBox="0 0 16 15"><path d="M6.8 4.3 L6.8 10.7 L3.4000000000000004 7.5 Z" fill="#ececec"/><path d="M9.2 4.3 L9.2 10.7 L12.6 7.5 Z" fill="#ececec"/></svg>
<div class="t tr" style="left:525px;top:707px;width:90px;height:13px;">Italic</div>
<div class="fld" style="left:617px;top:705px;width:63px;height:15px;"></div>
<div class="t" style="left:620px;top:706px;width:44px;height:15px;line-height:15px;height:15px;color:#141518">0.00</div>
<div class="btn" style="left:664px;top:705px;width:16px;height:15px;"></div>
<svg style="left:664px;top:705px" width="16" height="15" viewBox="0 0 16 15"><path d="M6.8 4.3 L6.8 10.7 L3.4000000000000004 7.5 Z" fill="#ececec"/><path d="M9.2 4.3 L9.2 10.7 L12.6 7.5 Z" fill="#ececec"/></svg>
<div class="t tr" style="left:525px;top:730px;width:90px;height:13px;">X</div>
<div class="fld" style="left:617px;top:728px;width:63px;height:15px;"></div>
<div class="t" style="left:620px;top:729px;width:44px;height:15px;line-height:15px;height:15px;color:#141518">3.00</div>
<div class="btn" style="left:664px;top:728px;width:16px;height:15px;"></div>
<svg style="left:664px;top:728px" width="16" height="15" viewBox="0 0 16 15"><path d="M6.8 4.3 L6.8 10.7 L3.4000000000000004 7.5 Z" fill="#ececec"/><path d="M9.2 4.3 L9.2 10.7 L12.6 7.5 Z" fill="#ececec"/></svg>
<div class="t tr" style="left:525px;top:749px;width:90px;height:13px;">Y</div>
<div class="fld" style="left:617px;top:747px;width:63px;height:15px;"></div>
<div class="t" style="left:620px;top:748px;width:44px;height:15px;line-height:15px;height:15px;color:#141518">3.00</div>
<div class="btn" style="left:664px;top:747px;width:16px;height:15px;"></div>
<svg style="left:664px;top:747px" width="16" height="15" viewBox="0 0 16 15"><path d="M6.8 4.3 L6.8 10.7 L3.4000000000000004 7.5 Z" fill="#ececec"/><path d="M9.2 4.3 L9.2 10.7 L12.6 7.5 Z" fill="#ececec"/></svg>
<div id="lt" style="left:0;top:0;white-space:nowrap;font:bold 41px 'Liberation Sans',sans-serif;letter-spacing:0;line-height:41px;height:41px;color:#2e3035;-webkit-text-stroke:0.7px #2e3035;transform-origin:0 0;transform:translate(4.9px,201.5px) rotate(-90deg) scaleX(0.942)">LiveText<span style="font-size:6.5px;line-height:7px;font-weight:bold;position:relative;top:-17px;margin-left:6px;color:#2d3a48;-webkit-text-stroke:0">TM</span></div>
<div id="nt" style="left:0;top:0;white-space:nowrap;font:bold 18px 'Liberation Sans',sans-serif;letter-spacing:0;line-height:18px;color:#2c2e33;transform-origin:0 0;transform:translate(23.5px,312.5px) rotate(-90deg) scaleX(0.95)">NewTek</div>
<svg style="left:6px;top:207px" width="36" height="36" viewBox="0 0 36 36"><defs><linearGradient id="lg" x1="0" y1="0" x2="1" y2="0"><stop offset="0" stop-color="#8b8f91"/><stop offset="0.36" stop-color="#909496"/><stop offset="0.42" stop-color="#6a6d70"/><stop offset="0.52" stop-color="#3f4245"/><stop offset="0.7" stop-color="#55585b"/><stop offset="1" stop-color="#787c7e"/></linearGradient></defs><rect x="1.4" y="1.9" width="32.6" height="32.4" rx="5.5" fill="url(#lg)" stroke="#414448" stroke-width="1.3"/><path fill-rule="evenodd" d="M9 4 L12.2 4 L12.2 10.5 L27.4 10.5 L27.4 21.5 Q27.4 30 19.5 30 L9 30 Z M12.2 16.1 L22.2 16.1 L22.2 21 Q22.2 24.8 18.5 24.8 L12.2 24.8 Z" fill="#b1b4b4"/></svg>
<div class="" style="left:1023px;top:0px;width:1px;height:779px;background:#1e2024"></div>
<div class="" style="left:53px;top:778px;width:724px;height:1px;background:#3a3e44"></div>
</div></body></html>
